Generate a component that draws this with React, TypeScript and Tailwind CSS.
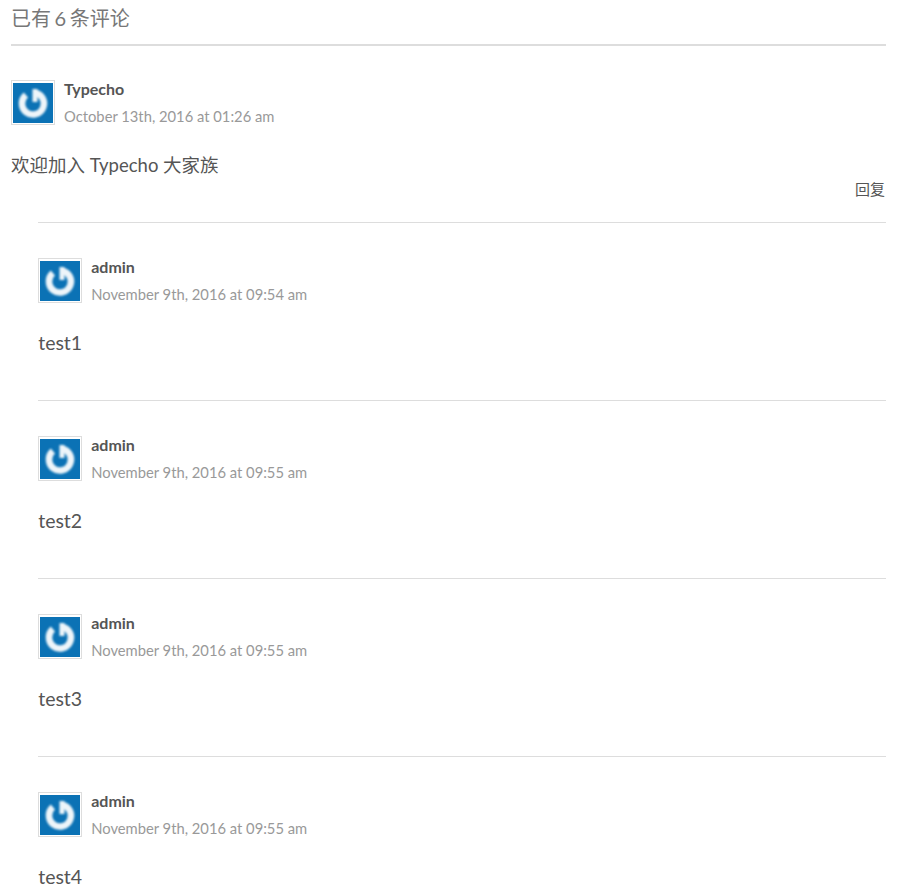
const Avatar = () => (
  <div className="w-[44px] h-[45px] border border-[#dddddd] pt-[2px] pb-[1px] px-[1px] bg-white shrink-0">
    <svg viewBox="0 0 40 40" className="block w-[40px] h-[40px]">
      <rect width="40" height="40" fill="#0b72b5" />
      <g className="blur-[0.9px]">
        <path d="M12.93 12.07 A11 11 0 1 0 22 9.7" fill="none" stroke="#eef5f9" strokeWidth="6.5" />
        <path d="M22 6 V19" fill="none" stroke="#eef5f9" strokeWidth="5" />
      </g>
    </svg>
  </div>
);

const Meta = ({ name, date }: { name: string; date: string }) => (
  <div className="flex gap-[9px]">
    <Avatar />
    <div>
      <div className="text-[16px] leading-[18px] font-bold text-[#555555]">{name}</div>
      <div className="text-[14.75px] leading-[18px] text-[#999999] mt-[9px]">{date}</div>
    </div>
  </div>
);

const replies = [
  ["test1", "November 9th, 2016 at 09:54 am"],
  ["test2", "November 9th, 2016 at 09:55 am"],
  ["test3", "November 9th, 2016 at 09:55 am"],
  ["test4", "November 9th, 2016 at 09:55 am"],
];

export default function App() {
  return (
    <div className="h-[887px] overflow-hidden bg-white pl-[11px] pr-[15px] font-['Lato','Noto_Sans_CJK_SC',sans-serif] text-[#555555]">
      <h3 className="text-[20px] [word-spacing:-1.5px] leading-[37px] font-normal text-[#777777] border-b-2 border-[#dddddd] h-[46px]">已有 6 条评论</h3>
      <div className="pt-[34px]">
        <Meta name="Typecho" date="October 13th, 2016 at 01:26 am" />
        <p className="text-[18.5px] leading-[26px] mt-[27px]">欢迎加入 Typecho 大家族</p>
        <div className="text-right text-[15px] leading-[20px] mt-[1px] pr-[1px]">回复</div>
      </div>
      <div className="ml-[27.2px] mt-[23px]">
        {replies.map(([text, date], i) => (
          <div key={i} className="border-t border-[#dddddd] pt-[35px] h-[178px]">
            <Meta name="admin" date={date} />
            <p className="text-[19.5px] leading-[26px] mt-[27px]">{text}</p>
          </div>
        ))}
      </div>
    </div>
  );
}
